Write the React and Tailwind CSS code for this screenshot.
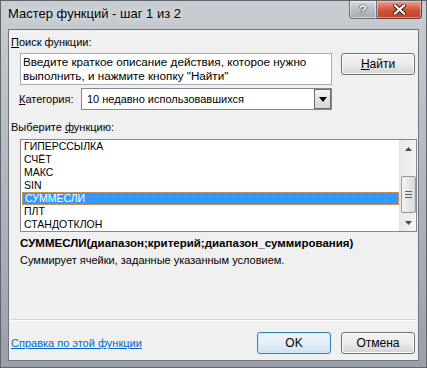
import React from 'react';

const ui = "font-['Liberation_Sans',Arial,sans-serif]";

const items = ['ГИПЕРССЫЛКА', 'СЧЁТ', 'МАКС', 'SIN', 'СУММЕСЛИ', 'ПЛТ', 'СТАНДОТКЛОН'];

const Win7Button = ({ children, primary = false, className = '' }) => (
  <button
    className={`h-[22px] w-[74px] rounded-[3px] border text-[12px] text-black flex items-center justify-center ${
      primary
        ? 'border-[#3c7fb1] bg-gradient-to-b from-[#eef5fb] via-[#e3eef8] to-[#cfe2f1] shadow-[inset_0_0_0_1px_#cde9fb]'
        : 'border-[#707070] bg-gradient-to-b from-[#f2f2f2] via-[#ebebeb] to-[#d3d3d3] shadow-[inset_0_0_0_1px_#fbfbfb]'
    } ${className}`}
  >
    {children}
  </button>
);

const CaptionButtons = () => (
  <div className="flex items-start mr-[4px]">
    <div className="w-[28px] h-[18px] rounded-bl-[4px] border border-[#6b7077] border-t-0 bg-gradient-to-b from-[#d7dbe0] via-[#b9bfc6] to-[#a5acb4] flex items-center justify-center shadow-[inset_0_0_0_1px_rgba(255,255,255,0.5)]">
      <span className="text-[13px] font-bold text-white leading-none [text-shadow:0_0_2px_#333,0_0_1px_#000]">?</span>
    </div>
    <div className="w-[45px] h-[18px] rounded-br-[4px] border border-[#6b3a34] border-t-0 border-l-0 bg-gradient-to-b from-[#e8a493] via-[#d0583f] to-[#c13b25] flex items-center justify-center shadow-[inset_0_0_0_1px_rgba(255,220,210,0.55)]">
      <svg width="13" height="11" viewBox="0 0 13 11">
        <path d="M2 1.5 L11 9.5 M11 1.5 L2 9.5" stroke="#3a1a14" strokeWidth="4" strokeLinecap="square" />
        <path d="M2 1.5 L11 9.5 M11 1.5 L2 9.5" stroke="#ffffff" strokeWidth="2.2" strokeLinecap="square" />
      </svg>
    </div>
  </div>
);

const Arrow = ({ up = false }) => (
  <svg width="7" height="4" viewBox="0 0 7 4">
    <path d={up ? 'M3.5 0 L7 4 L0 4 Z' : 'M0 0 L7 0 L3.5 4 Z'} fill="#4a4a4a" />
  </svg>
);

export default function App() {
  return (
    <div className={`${ui} w-[427px] h-[368px] bg-gradient-to-b from-[#c7cdd3] via-[#b0b6bd] to-[#9aa0a7] border border-[#5f646a] flex flex-col`}>
      <div className="h-[28px] flex items-start justify-between">
        <span className="ml-[7px] mt-[5px] text-[13px] text-black leading-[16px] [text-shadow:0_0_6px_rgba(255,255,255,0.9)]">
          Мастер функций - шаг 1 из 2
        </span>
        <CaptionButtons />
      </div>

      <div className="mx-[7px] h-[332px] bg-[#f0f0f0] border border-[#6f757b] flex flex-col text-[11px] text-black">
        <div className="ml-[2px] mt-[5px] leading-[14px]">
          <u>П</u>оиск функции:
        </div>

        <div className="flex items-start mt-[4px]">
          <div className="ml-[11px] w-[312px] h-[32px] bg-white border border-[#a5acb5] px-[2px] pt-[1px] text-[11.7px] leading-[14px]">
            Введите краткое описание действия, которое нужно
            <br />
            выполнить, и нажмите кнопку "Найти"
          </div>
          <Win7Button className="ml-[9px] w-[73px]">
            <span>
              <u>Н</u>айти
            </span>
          </Win7Button>
        </div>

        <div className="flex items-center mt-[3px]">
          <span className="ml-[10px] w-[62px] leading-[14px]">
            <u>К</u>атегория:
          </span>
          <div className="w-[251px] h-[22px] bg-white border border-[#828790] flex items-center">
            <span className="flex-1 pl-[5px] leading-[14px]">10 недавно использовавшихся</span>
            <div className="w-[17px] h-[20px] border border-[#6d6d6d] bg-gradient-to-b from-[#f4f4f4] to-[#d6d6d6] flex items-center justify-center">
              <svg width="8" height="5" viewBox="0 0 8 5">
                <path d="M0 0 L8 0 L4 5 Z" fill="#000" />
              </svg>
            </div>
          </div>
        </div>

        <div className="ml-[2px] mt-[10px] leading-[14px]">
          Выберите <u>ф</u>ункцию:
        </div>

        <div className="ml-[11px] mt-[5px] w-[397px] h-[93px] bg-white border border-[#828790] flex">
          <div className="flex-1 pl-[1px] flex flex-col text-[10.5px] leading-[13px]">
            {items.map((it) => (
              <div
                key={it}
                className={`h-[13px] pl-[2px] ${
                  it === 'СУММЕСЛИ'
                    ? 'bg-[#3399ff] text-white border border-dotted border-[#d8a36a] pl-[1px] leading-[11px]'
                    : ''
                }`}
              >
                {it}
              </div>
            ))}
          </div>
          <div className="w-[17px] bg-gradient-to-r from-[#e8e8e8] to-[#f4f4f4] border-l border-[#e3e3e3] flex flex-col items-center">
            <div className="h-[17px] flex items-center justify-center">
              <Arrow up />
            </div>
            <div className="mt-[19px] w-[15px] h-[37px] rounded-[2px] border border-[#979797] bg-gradient-to-r from-[#f3f3f3] via-[#e6e6e6] to-[#d8d8d8] flex flex-col items-center justify-center gap-[2px]">
              <div className="w-[7px] h-[1px] bg-[#606060]" />
              <div className="w-[7px] h-[1px] bg-[#606060]" />
              <div className="w-[7px] h-[1px] bg-[#606060]" />
            </div>
            <div className="mt-auto h-[17px] flex items-center justify-center">
              <Arrow />
            </div>
          </div>
        </div>

        <div className="ml-[11px] mt-[4px] font-bold text-[11.5px] leading-[14px]">
          СУММЕСЛИ(диапазон;критерий;диапазон_суммирования)
        </div>
        <div className="ml-[11px] mt-[3px] leading-[14px]">
          Суммирует ячейки, заданные указанным условием.
        </div>

        <div className="mx-[2px] mt-[52px] h-[1px] bg-[#d6d6d6] border-b border-white box-content" />

        <div className="flex items-center mt-[11px]">
          <a className="ml-[2px] text-[#0066cc] underline leading-[14px] cursor-pointer">Справка по этой функции</a>
          <Win7Button primary className="ml-auto w-[74px]">
            OK
          </Win7Button>
          <Win7Button className="ml-[10px] mr-[3px] w-[74px]">Отмена</Win7Button>
        </div>
      </div>
    </div>
  );
}
